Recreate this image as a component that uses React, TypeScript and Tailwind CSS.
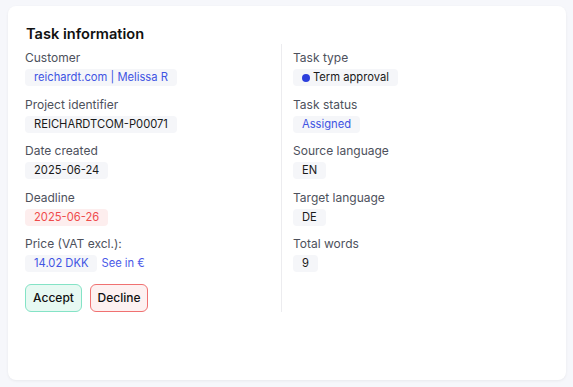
const left = [
  { label: 'Customer', value: 'reichardt.com | Melissa R', tone: 'blue' },
  { label: 'Project identifier', value: 'REICHARDTCOM-P00071', tone: 'plain' },
  { label: 'Date created', value: '2025-06-24', tone: 'plain' },
  { label: 'Deadline', value: '2025-06-26', tone: 'red' },
];

const right = [
  { label: 'Task status', value: 'Assigned', tone: 'blue' },
  { label: 'Source language', value: 'EN', tone: 'plain' },
  { label: 'Target language', value: 'DE', tone: 'plain' },
  { label: 'Total words', value: '9', tone: 'plain' },
];

const chipTone: Record<string, string> = {
  blue: 'bg-[#f5f6f9] text-[#4054e3]',
  plain: 'bg-[#f5f6f9] text-[#1a1a1a]',
  red: 'bg-[#fdeeee] text-[#ef4b4b]',
};

function Field({ label, children }: { label: string; children: React.ReactNode }) {
  return (
    <div className="flex flex-col items-start gap-[2px]">
      <span className="text-[12px] leading-[18px] text-[#4d515c]">{label}</span>
      {children}
    </div>
  );
}

function Chip({ tone, children }: { tone: string; children: React.ReactNode }) {
  return (
    <span className={`rounded-[4px] px-[9px] text-[11.2px] leading-[17px] ${chipTone[tone]}`}>
      {children}
    </span>
  );
}

export default function App() {
  return (
    <div
      className="w-[573px] h-[387px] bg-[#f6f7fb] pl-[8px] pt-[6px]"
      style={{ fontFamily: 'Inter, "Noto Sans", sans-serif' }}
    >
      <div className="w-[558px] h-[374px] rounded-[8px] bg-white shadow-[0_1px_3px_rgba(0,0,0,0.06)] px-[17px] pt-[17px]">
        <h1 className="text-[14.6px] leading-[22px] font-semibold text-[#111] pl-[1px]">Task information</h1>

        <div className="-mt-[1px] flex">
          {/* Left column */}
          <div className="w-[256px] flex flex-col gap-[9.5px] pt-[5px]">
            {left.map((f) => (
              <Field key={f.label} label={f.label}>
                <Chip tone={f.tone}>{f.value}</Chip>
              </Field>
            ))}
            <Field label="Price (VAT excl.):">
              <div className="flex items-center gap-[4px]">
                <Chip tone="blue">14.02 DKK</Chip>
                <span className="text-[11.2px] leading-[17px] text-[#4a5ae8]">See in €</span>
              </div>
            </Field>
            <div className="flex gap-[8px] mt-[2px]">
              <button className="h-[28px] w-[57px] rounded-[6px] border border-[#84e3c6] bg-[#e7f9f2] text-[12px] font-medium text-[#111]">
                Accept
              </button>
              <button className="h-[28px] w-[58px] rounded-[6px] border border-[#f07171] bg-[#fdf1f1] text-[12px] font-medium text-[#111]">
                Decline
              </button>
            </div>
          </div>

          {/* Right column */}
          <div className="flex-1 border-l border-[#ececef] pl-[11px] flex flex-col gap-[9.5px] pt-[5px]">
            <Field label="Task type">
              <span className="flex items-center gap-[3px] rounded-[4px] bg-[#f5f6f9] px-[9px] text-[11.2px] leading-[17px] text-[#1a1a1a]">
                <span className="w-[8px] h-[8px] rounded-full bg-[#2c3fdc]" />
                Term approval
              </span>
            </Field>
            {right.map((f) => (
              <Field key={f.label} label={f.label}>
                <Chip tone={f.tone}>{f.value}</Chip>
              </Field>
            ))}
          </div>
        </div>
      </div>
    </div>
  );
}
